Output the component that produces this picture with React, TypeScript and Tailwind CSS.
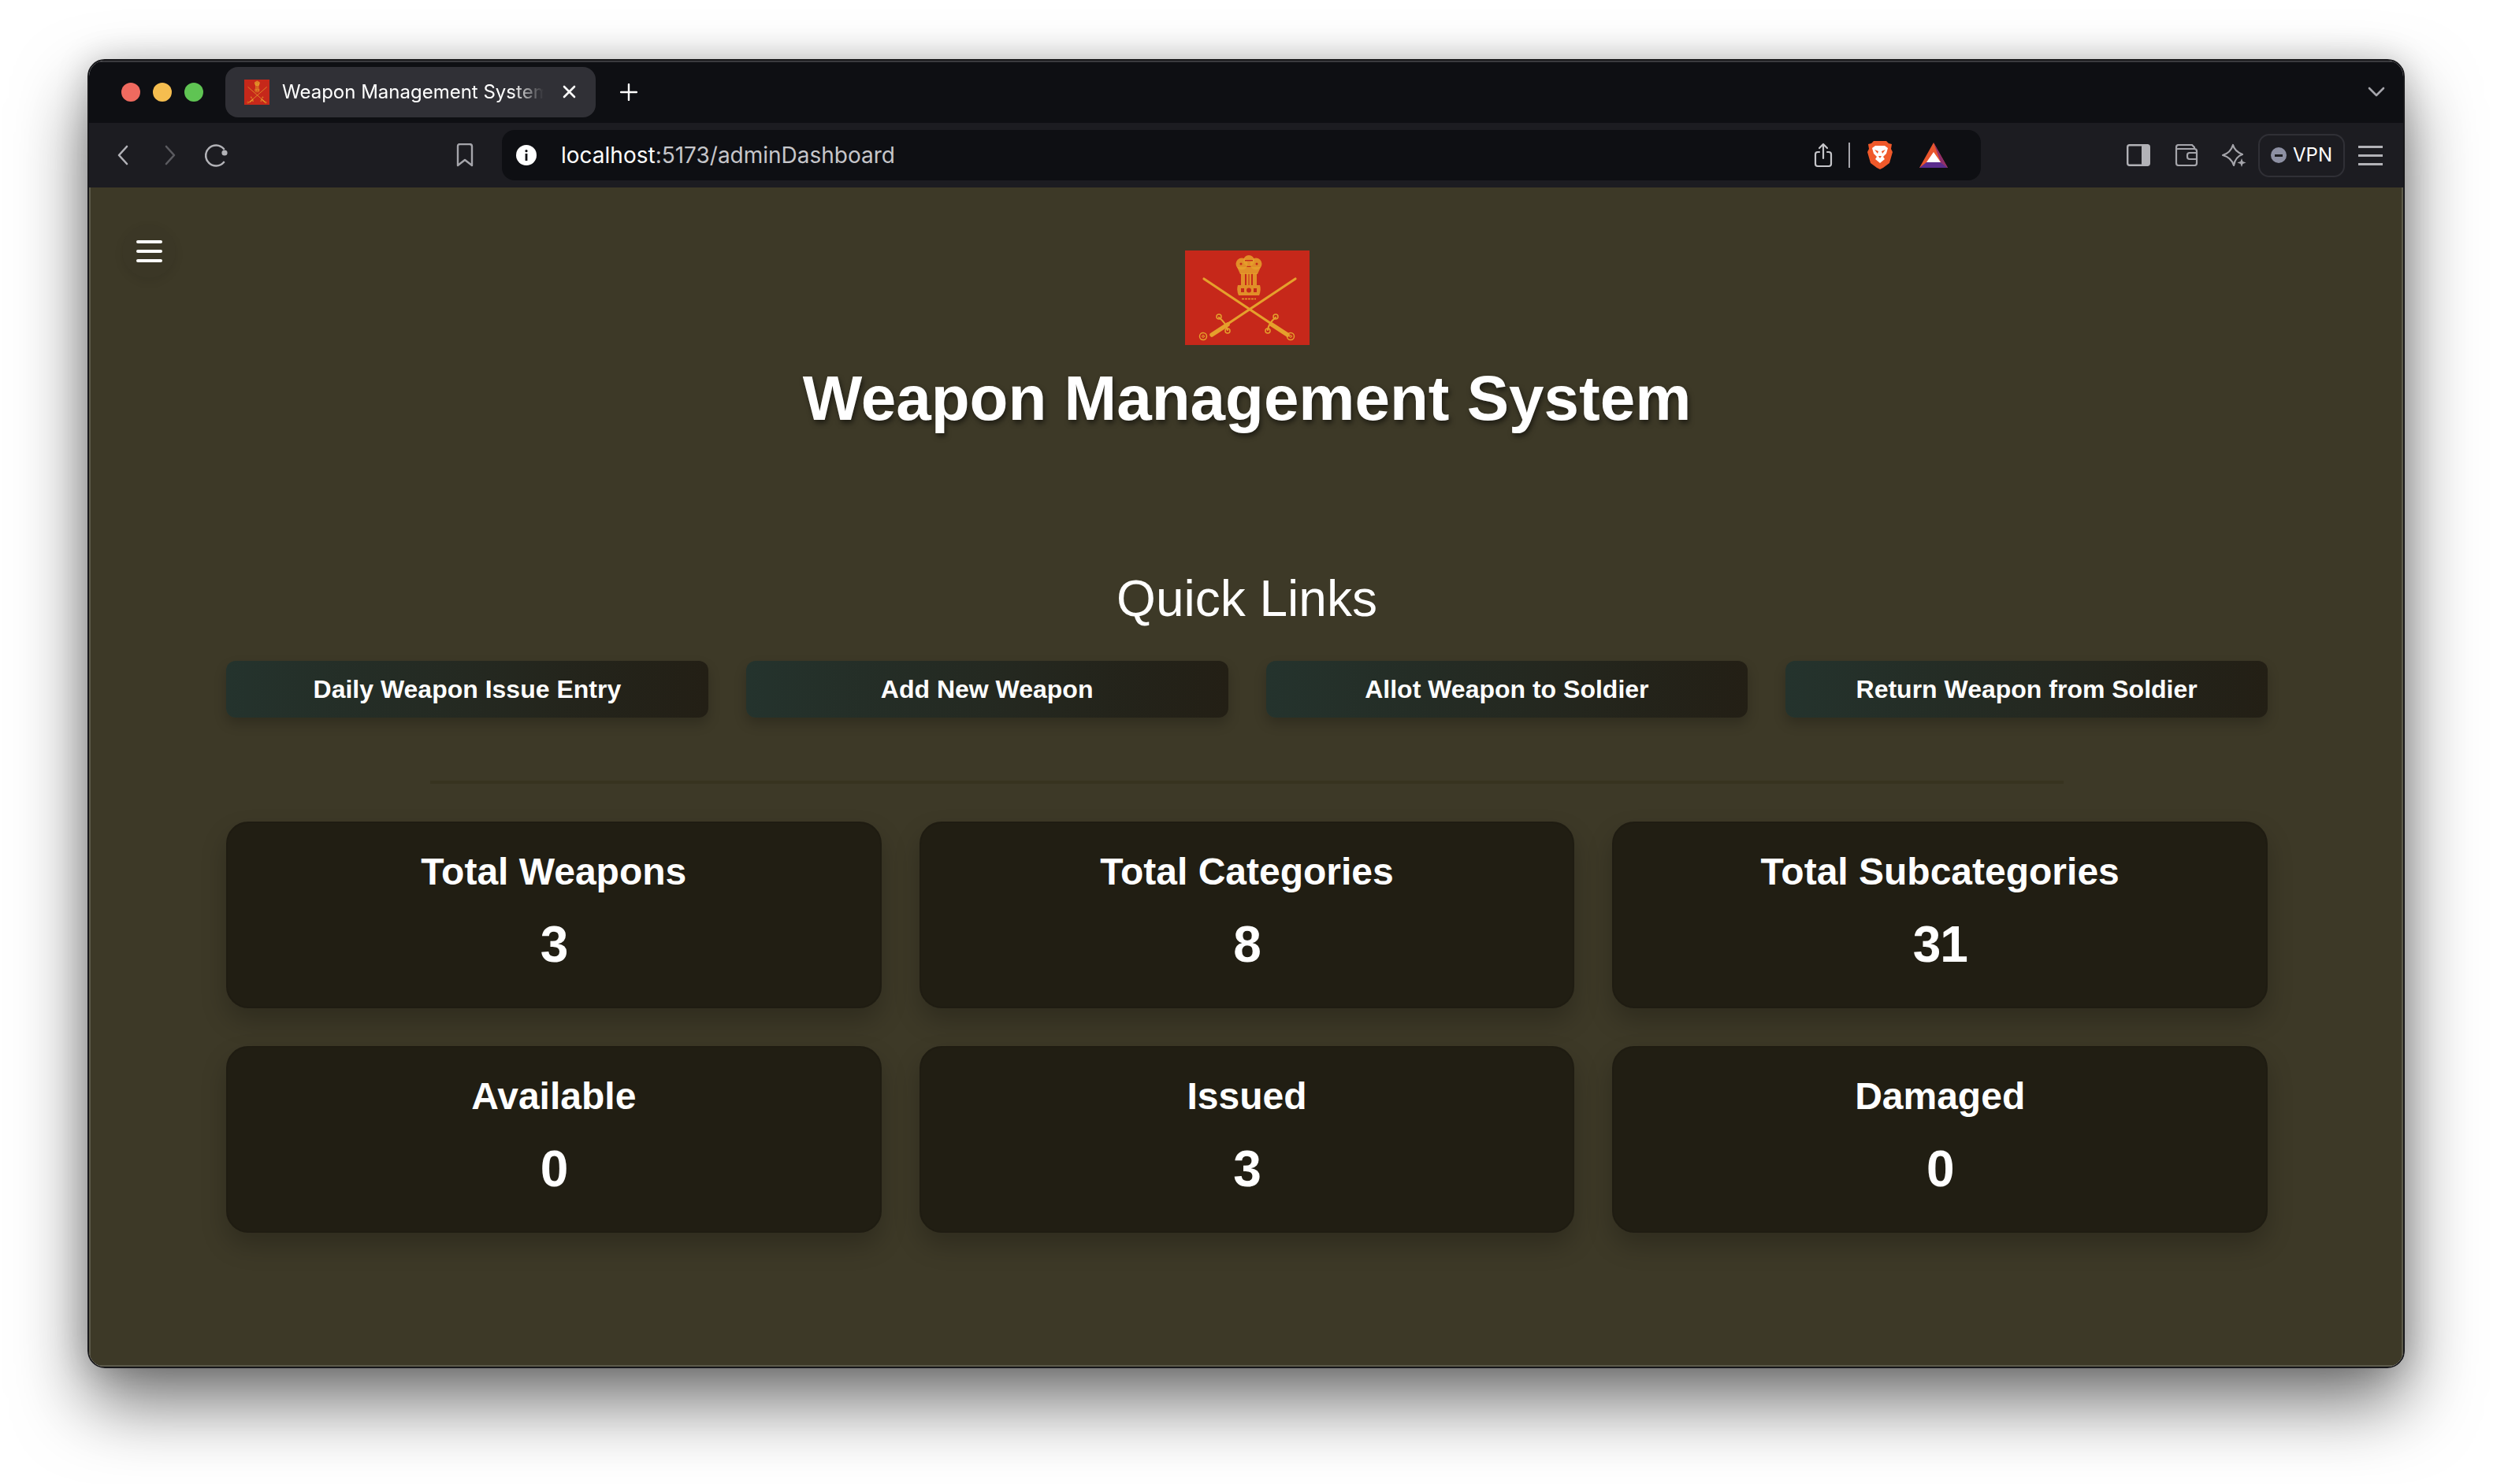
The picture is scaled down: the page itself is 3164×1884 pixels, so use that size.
const sans = "font-['Liberation_Sans',Arial,sans-serif]";
const ui = "font-['Inter','Noto_Sans',sans-serif]";

const quickLinks = ['Daily Weapon Issue Entry', 'Add New Weapon', 'Allot Weapon to Soldier', 'Return Weapon from Soldier'];
const stats = [
  { label: 'Total Weapons', value: '3' },
  { label: 'Total Categories', value: '8' },
  { label: 'Total Subcategories', value: '31' },
  { label: 'Available', value: '0' },
  { label: 'Issued', value: '3' },
  { label: 'Damaged', value: '0' },
];

function ArmyEmblem({ className }: { className: string }) {
  const gold = '#e5a02c';
  return (
    <svg viewBox="0 0 158 120" preserveAspectRatio="none" className={className}>
      <rect width="158" height="120" fill="#c6281a" />
      <g fill="none" stroke={gold} strokeLinecap="round">
        {/* swords */}
        <path d="M24 36L108 92" strokeWidth="3.200" />
        <path d="M140 36L56 92" strokeWidth="3.200" />
        <path d="M110 94L130 107" strokeWidth="5.500" />
        <path d="M54 94L34 107" strokeWidth="5.500" />
        <path d="M115 85Q106 92 105 101M43 85Q52 92 54 101" strokeWidth="2.200" />
        <circle cx="115" cy="84" r="3" strokeWidth="1.500" />
        <circle cx="105" cy="102" r="3" strokeWidth="1.500" />
        <circle cx="43" cy="84" r="3" strokeWidth="1.500" />
        <circle cx="54" cy="102" r="3" strokeWidth="1.500" />
        <circle cx="134" cy="109" r="4.500" strokeWidth="1.500" />
        <circle cx="134" cy="109" r="1.400" strokeWidth="1" />
        <circle cx="23" cy="109" r="4.500" strokeWidth="1.500" />
        <circle cx="23" cy="109" r="1.400" strokeWidth="1" />
      </g>
      {/* lion capital, leaves a red gap under the crossing */}
      <g fill={gold} fillOpacity="0.85">
        <circle cx="72" cy="17" r="7.500" />
        <circle cx="81" cy="13" r="7" />
        <circle cx="90" cy="17" r="7.500" />
        <path d="M66 21h30l-4 9H70z" />
        <rect x="71" y="29" width="5" height="15" />
        <rect x="78" y="29" width="2.500" height="15" />
        <rect x="81.500" y="29" width="2.500" height="15" />
        <rect x="86" y="29" width="5" height="15" />
        <path d="M67 44h28q2 6-1 13H68q-3-7-1-13z" />
      </g>
      <g fill="#c6281a">
        <circle cx="81" cy="50.500" r="3" />
        <rect x="71" y="48" width="4" height="5" />
        <rect x="87" y="48" width="4" height="5" />
        <rect x="76" y="12" width="10" height="1.400" />
        <circle cx="71" cy="17" r="1.500" />
        <circle cx="91" cy="17" r="1.500" />
      </g>
      <path d="M72 61.500h18" stroke={gold} strokeWidth="1.600" strokeDasharray="3 1" />
    </svg>
  );
}

function StatCard({ label, value }: { label: string; value: string }) {
  return (
    <div className="flex h-[237px] flex-col items-center rounded-[28px] border-2 border-[#1f1c12] bg-[#211e13] pt-[32px] shadow-[0_16px_32px_rgba(0,0,0,0.22)]">
      <div className="text-[48px] leading-[60px] font-bold text-white">{label}</div>
      <div className="mt-[30px] text-[64px] leading-[64px] font-bold tracking-[-0.02em] text-white">{value}</div>
    </div>
  );
}

export default function App() {
  return (
    <div className="h-[1884px] w-[3164px] overflow-hidden bg-white pt-[75px] pl-[111px]">
      <div className="flex h-[1662px] w-[2941px] flex-col overflow-hidden rounded-[22px] border-2 border-[#17171a] shadow-[0_44px_90px_rgba(0,0,0,0.55),0_0_40px_rgba(0,0,0,0.18)]">
        {/* tab strip */}
        <div className={`flex h-[79px] shrink-0 items-center bg-[#0e0f13] pl-[41px] shadow-[inset_0_2px_0_#3a3a3e] ${ui}`}>
          <div className="flex gap-[16px]">
            <span className="size-[24px] rounded-full bg-[#ef6a5f]" />
            <span className="size-[24px] rounded-full bg-[#f5bd4f]" />
            <span className="size-[24px] rounded-full bg-[#5fc453]" />
          </div>
          <div className="ml-[28px] flex h-[64px] w-[470px] items-center rounded-[16px] bg-[#303036] pl-[24px]">
            <ArmyEmblem className="h-[32px] w-[32px] shrink-0" />
            <span className="ml-[16px] w-[332px] overflow-hidden text-[24px] whitespace-nowrap text-white [mask-image:linear-gradient(to_right,black_88%,transparent)]">Weapon Management System</span>
            <svg viewBox="0 0 17 17" className="ml-[24px] h-[17px] w-[17px]" fill="none" stroke="white" strokeWidth="2.600" strokeLinecap="round">
              <path d="M2 2l13 13M15 2L2 15" />
            </svg>
          </div>
          <svg viewBox="0 0 22 22" className="ml-[31px] h-[22px] w-[22px]" fill="none" stroke="white" strokeWidth="2.400" strokeLinecap="round">
            <path d="M11 1v20M1 11h20" />
          </svg>
          <svg viewBox="0 0 22 13" className="mr-[23px] ml-auto h-[13px] w-[22px]" fill="none" stroke="#a5a5ab" strokeWidth="2.600" strokeLinecap="round" strokeLinejoin="round">
            <path d="M2 2l9 9 9-9" />
          </svg>
        </div>

        {/* toolbar */}
        <div className={`flex h-[82px] shrink-0 items-center bg-[#1c1c21] pl-[36px] ${ui}`}>
          <svg viewBox="0 0 14 26" className="h-[26px] w-[14px]" fill="none" stroke="#b2b2b7" strokeWidth="2.600" strokeLinecap="round" strokeLinejoin="round">
            <path d="M12 2L2 13l10 11" />
          </svg>
          <svg viewBox="0 0 14 26" className="ml-[46px] h-[26px] w-[14px]" fill="none" stroke="#5b5b60" strokeWidth="2.600" strokeLinecap="round" strokeLinejoin="round">
            <path d="M2 2l10 11L2 24" />
          </svg>
          <svg viewBox="0 0 30 30" className="ml-[37px] h-[30px] w-[30px]" fill="none" stroke="#b2b2b7" strokeWidth="2.600" strokeLinecap="round">
            <path d="M24 7A13 13 0 1 0 24 24" />
            <circle cx="25" cy="12" r="3.600" fill="#b2b2b7" stroke="none" />
          </svg>
          <svg viewBox="0 0 22 30" className="ml-[289px] h-[30px] w-[22px]" fill="none" stroke="#a5a5ab" strokeWidth="2.400" strokeLinejoin="round">
            <path d="M2 4q0-3 3-3h12q3 0 3 3v24l-9-7-9 7z" />
          </svg>
          <div className="ml-[36px] flex h-[64px] w-[1877px] items-center rounded-[16px] bg-[#0e0f13] pl-[18px]">
            <span className="flex size-[26px] items-center justify-center rounded-full bg-white">
              <svg viewBox="0 0 4 14" className="h-[14px] w-[4px]" fill="#0e0f13">
                <circle cx="2" cy="1.700" r="1.600" />
                <rect x="0.600" y="5" width="2.800" height="9" />
              </svg>
            </span>
            <span className="ml-[31px] text-[28px] text-white">
              localhost<span className="text-[#c6c6ca]">:5173/adminDashboard</span>
            </span>
            <svg viewBox="0 0 24 32" className="ml-auto h-[32px] w-[24px]" fill="none" stroke="#c6c6ca" strokeWidth="2.200" strokeLinecap="round" strokeLinejoin="round">
              <path d="M12 20V2M7 7l5-5 5 5M7 12H5q-3 0-3 3v12q0 3 3 3h14q3 0 3-3V15q0-3-3-3h-2" />
            </svg>
            <span className="ml-[20px] h-[32px] w-[2px] bg-[#a5a5ab]" />
            <svg viewBox="0 0 32 36" className="ml-[22px] h-[36px] w-[32px]">
              <path d="M8 0h16l3 3 4 1-1 6 2 4-4 14-8 6-4 2-4-2-8-6L0 14l2-4-1-6 4-1z" fill="#f0592a" />
              <path d="M10 6h12l4 3-2 7-4 4 2 3-6 5-6-5 2-3-4-4-2-7z" fill="white" />
              <path d="M9 11l5 2-1 3zM23 11l-5 2 1 3zM14 19h4l-2 3z" fill="#f0592a" />
            </svg>
            <svg viewBox="0 0 36 32" className="ml-[34px] h-[32px] w-[36px]">
              <path d="M18 0L0 32h36z" fill="#e8552d" />
              <path d="M18 0l18 32-9-7z" fill="#8e2e6d" />
              <path d="M0 32h36l-9-7H9z" fill="#5b2d8e" />
              <path d="M18 12L9 25h18z" fill="white" />
            </svg>
            <span className="w-[42px] shrink-0" />
          </div>
          <svg viewBox="0 0 30 28" className="ml-[185px] h-[28px] w-[30px]" fill="none">
            <rect x="1.200" y="1.200" width="27.600" height="25.600" rx="2.500" stroke="#b2b2b7" strokeWidth="2.400" />
            <rect x="19" y="1" width="10" height="26" rx="2" fill="#b2b2b7" />
          </svg>
          <svg viewBox="0 0 30 28" className="ml-[31px] h-[28px] w-[30px]" fill="none" stroke="#a5a5ab" strokeWidth="2.200" strokeLinejoin="round">
            <path d="M2 7V4q0-3 3-3h17l3 3v3M2 7q0-1 2-1h21q3 0 3 3v15q0 3-3 3H5q-3 0-3-3z" />
            <path d="M28 11H19q-3 0-3 3v2q0 3 3 3h9" />
          </svg>
          <svg viewBox="0 0 32 30" className="ml-[29px] h-[30px] w-[32px]" fill="none">
            <path d="M15 2q2 8 12 12-9 3-11 14-3-10-14-13 10-3 13-13z" stroke="#a5a5ab" strokeWidth="2.200" strokeLinejoin="round" />
            <path d="M26 19l1.500 4 4 1.500-4 1.500-1.500 4-1.500-4-4-1.500 4-1.500z" fill="#a5a5ab" />
          </svg>
          <div className="ml-[15px] flex h-[55px] w-[110px] items-center rounded-[14px] border-2 border-[#303036] pl-[14px]">
            <span className="flex size-[20px] items-center justify-center rounded-full bg-[#8d90a3]">
              <span className="h-[3px] w-[10px] bg-[#1c1c21]" />
            </span>
            <span className="ml-[8px] text-[24px] font-normal text-white">VPN</span>
          </div>
          <div className="ml-[17px] flex w-[31px] flex-col gap-[8px]">
            <span className="h-[3px] bg-[#b2b2b7]" />
            <span className="h-[3px] bg-[#b2b2b7]" />
            <span className="h-[3px] bg-[#b2b2b7]" />
          </div>
        </div>

        {/* page */}
        <div className={`relative flex flex-1 flex-col items-center bg-[#3d3927] pr-[172px] pl-[174px] shadow-[inset_2px_0_0_#5c5a4a,inset_-2px_0_0_#5c5a4a,inset_0_-2px_0_#5c5a4a] ${sans}`}>
          <button className="absolute top-[47px] left-[42px] flex size-[68px] flex-col items-center justify-center gap-[8px] rounded-full bg-[#3b3726] shadow-[0_4px_12px_rgba(0,0,0,0.08)]">
            <span className="h-[4px] w-[33px] rounded-sm bg-white" />
            <span className="h-[4px] w-[33px] rounded-sm bg-white" />
            <span className="h-[4px] w-[33px] rounded-sm bg-white" />
          </button>
          <ArmyEmblem className="mt-[80px] h-[120px] w-[158px]" />
          <h1 className="mt-[20px] text-[80px] leading-[96px] font-bold text-white [text-shadow:2px_4px_6px_rgba(0,0,0,0.5)]">Weapon Management System</h1>
          <h2 className="mt-[170px] text-[64px] leading-[72px] text-white">Quick Links</h2>
          <div className="mt-[43px] grid w-full grid-cols-4 gap-[48px]">
            {quickLinks.map((link) => (
              <button key={link} className="h-[72px] rounded-[12px] bg-gradient-to-r from-[#24332d] to-[#231f15] text-[32px] font-bold text-white shadow-[0_8px_16px_rgba(0,0,0,0.2)]">
                {link}
              </button>
            ))}
          </div>
          <div className="mt-[80px] h-[4px] w-[80%] bg-[#37331f]" />
          <div className="mt-[48px] grid w-full grid-cols-3 gap-[48px]">
            {stats.map((stat) => (
              <StatCard key={stat.label} label={stat.label} value={stat.value} />
            ))}
          </div>
        </div>
      </div>
    </div>
  );
}
